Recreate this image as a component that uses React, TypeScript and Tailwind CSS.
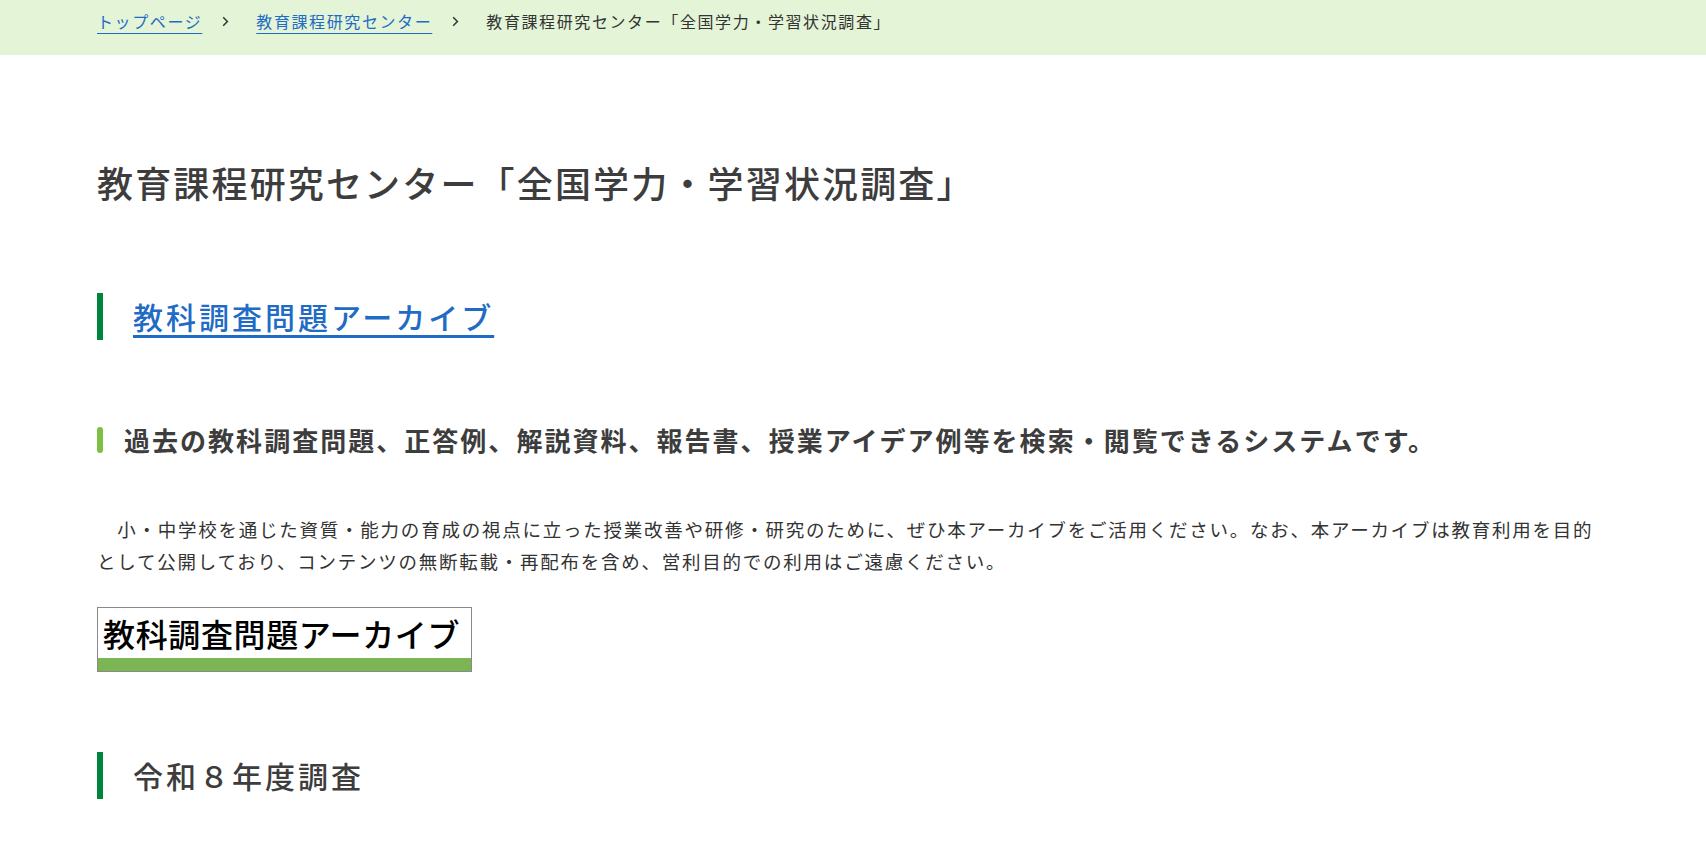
import React from "react";

const jp = "font-['Noto_Sans_CJK_JP','Noto_Sans',sans-serif]";

function Chevron() {
  return (
    <svg width="7" height="11" viewBox="0 0 7 11" className="ml-[20px] mr-[27px] shrink-0" aria-hidden>
      <path d="M1.2 1.2 5.4 5.5 1.2 9.8" fill="none" stroke="#333" strokeWidth="1.5" />
    </svg>
  );
}

function Breadcrumb() {
  return (
    <nav className="bg-[#e3f4d7] h-[55px] flex items-center px-[97px] text-[16px] tracking-[0.1em] leading-none pb-[13px]">
      <a href="#" className="text-[#1f6bc5] underline underline-offset-[5px] decoration-1">トップページ</a>
      <Chevron />
      <a href="#" className="text-[#1f6bc5] underline underline-offset-[5px] decoration-1">教育課程研究センター</a>
      <Chevron />
      <span className="text-[#333]">教育課程研究センター「全国学力・学習状況調査」</span>
    </nav>
  );
}

function SectionHeading({ children }: { children: React.ReactNode }) {
  return (
    <h2 className="border-l-[6px] border-[#00853c] pl-[30px] text-[30px] leading-[47px] tracking-[0.1em] font-medium text-[#3d3d3d]">
      {children}
    </h2>
  );
}

export default function App() {
  return (
    <div className={`${jp} bg-white min-h-screen text-[#333]`}>
      <Breadcrumb />
      <main className="pl-[97px] pr-[99px]">
        <h1 className="mt-[100px] text-[36px] leading-[54px] tracking-[0.06em] font-medium text-[#3d3d3d]">
          教育課程研究センター「全国学力・学習状況調査」
        </h1>

        <div className="mt-[84px]">
          <SectionHeading>
            <a href="#" className="text-[#1f6bc5] underline underline-offset-[6px] decoration-[3px]">
              教科調査問題アーカイブ
            </a>
          </SectionHeading>
        </div>

        <div className="mt-[81px] flex items-center">
          <span className="w-[6px] h-[26px] rounded-full bg-[#7bbf44] shrink-0" />
          <h3 className="pl-[21px] text-[26px] leading-[38px] tracking-[0.078em] font-bold text-[#3d3d3d]">
            過去の教科調査問題、正答例、解説資料、報告書、授業アイデア例等を検索・閲覧できるシステムです。
          </h3>
        </div>

        <p className="mt-[54px] text-[18.5px] leading-[32px] tracking-[0.095em] text-[#333]">
          {"\u3000"}小・中学校を通じた資質・能力の育成の視点に立った授業改善や研修・研究のために、ぜひ本アーカイブをご活用ください。なお、本アーカイブは教育利用を目的として公開しており、コンテンツの無断転載・再配布を含め、営利目的での利用はご遠慮ください。
        </p>

        <a href="#" className="mt-[30px] w-[375px] h-[65px] border border-[#8a8a8a] flex flex-col">
          <span className="flex-1 flex items-center pl-[5px] text-[32px] leading-none font-medium text-black tracking-[0.02em]">
            教科調査問題アーカイブ
          </span>
          <span className="h-[13px] bg-[#7cb554]" />
        </a>

        <div className="mt-[80px] pb-[60px]">
          <SectionHeading>令和８年度調査</SectionHeading>
        </div>
      </main>
    </div>
  );
}
